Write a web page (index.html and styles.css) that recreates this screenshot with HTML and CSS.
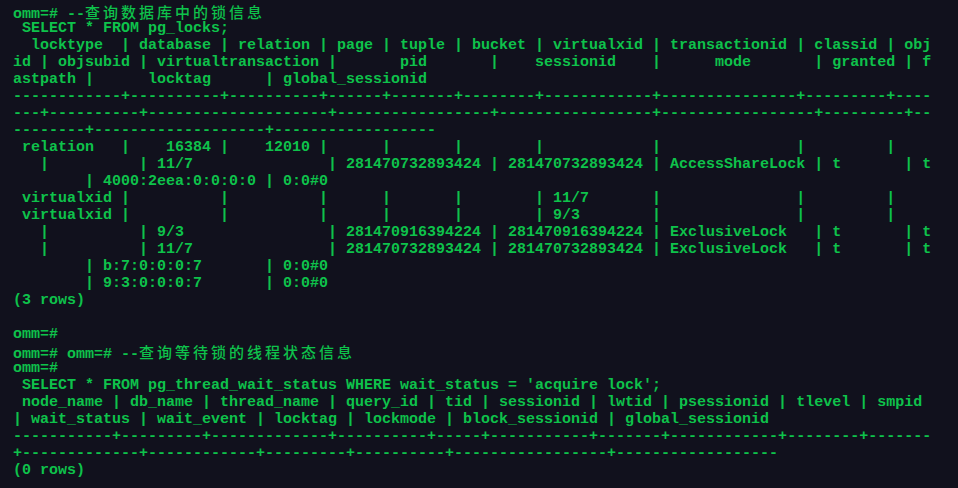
FILE: index.html
```html
<!DOCTYPE html>
<html lang="zh-CN">
<head>
<meta charset="utf-8">
<title>omm terminal</title>
<link rel="stylesheet" href="styles.css">
</head>
<body>
<div class="term">
<div class="ln">omm=# --<span class="cjk">查询数据库中的锁信息</span></div>
<div class="ln"> SELECT * FROM pg_locks;</div>
<div class="ln">  locktype  | database | relation | page | tuple | bucket | virtualxid | transactionid | classid | obj</div>
<div class="ln" id="l4"></div>
<div class="ln" id="l5"></div>
<div class="ln" id="l6"></div>
<div class="ln" id="l7"></div>
<div class="ln" id="l8"></div>
<div class="ln" id="l9"></div>
<div class="ln" id="l10"></div>
<div class="ln" id="l11"></div>
<div class="ln" id="l12"></div>
<div class="ln" id="l13"></div>
<div class="ln" id="l14"></div>
<div class="ln" id="l15"></div>
<div class="ln" id="l16"></div>
<div class="ln" id="l17"></div>
<div class="ln">(3 rows)</div>
<div class="ln"></div>
<div class="ln">omm=#</div>
<div class="ln">omm=# omm=# --<span class="cjk">查询等待锁的线程状态信息</span></div>
<div class="ln">omm=#</div>
<div class="ln"> SELECT * FROM pg_thread_wait_status WHERE wait_status = 'acquire lock';</div>
<div class="ln"> node_name | db_name | thread_name | query_id | tid | sessionid | lwtid | psessionid | tlevel | smpid</div>
<div class="ln">| wait_status | wait_event | locktag | lockmode | block_sessionid | global_sessionid</div>
<div class="ln" id="l26"></div>
<div class="ln" id="l27"></div>
<div class="ln">(0 rows)</div>
</div>
<script src="script.js"></script>
</body>
</html>
```
FILE: styles.css
```css
html, body {
  margin: 0;
  padding: 0;
  background: #11111d;
}
.term {
  padding: 3px 0 0 13px;
  font-family: "Liberation Mono", "DejaVu Sans Mono", monospace;
  font-size: 15px;
  font-weight: bold;
  color: #0ec24b;
}
.ln {
  height: 17px;
  line-height: 17px;
  white-space: pre;
}
.cjk {
  display: inline-block;
  height: 17px;
  line-height: 17px;
  vertical-align: baseline;
  font-family: "Noto Sans CJK SC", sans-serif;
  font-weight: 500;
  letter-spacing: 3px;
}
```
FILE: script.js
```js
(function () {
  function S(n) { return ' '.repeat(n); }
  function D(ws) { return ws.map(function (w) { return '-'.repeat(w); }).join('+'); }
  var lines = {
    l4: 'id | objsubid | virtualtransaction |' + S(7) + 'pid' + S(7) + '|' + S(4) + 'sessionid' + S(4) + '|' + S(6) + 'mode' + S(7) + '| granted | f',
    l5: 'astpath |' + S(6) + 'locktag' + S(6) + '| global_sessionid',
    l6: D([12, 10, 10, 6, 7, 8, 12, 15, 9, 4]),
    l7: D([3, 10, 20, 17, 17, 17, 9, 2]),
    l8: D([8, 19, 18]),
    l9: ' relation' + S(3) + '|' + S(4) + '16384 |' + S(4) + '12010 |' + S(6) + '|' + S(7) + '|' + S(8) + '|' + S(12) + '|' + S(15) + '|' + S(9) + '|',
    l10: S(3) + '|' + S(10) + '| 11/7' + S(15) + '| 281470732893424 | 281470732893424 | AccessShareLock | t' + S(7) + '| t',
    l11: S(8) + '| 4000:2eea:0:0:0:0 | 0:0#0',
    l12: ' virtualxid |' + S(10) + '|' + S(10) + '|' + S(6) + '|' + S(7) + '|' + S(8) + '| 11/7' + S(7) + '|' + S(15) + '|' + S(9) + '|',
    l13: ' virtualxid |' + S(10) + '|' + S(10) + '|' + S(6) + '|' + S(7) + '|' + S(8) + '| 9/3' + S(8) + '|' + S(15) + '|' + S(9) + '|',
    l14: S(3) + '|' + S(10) + '| 9/3' + S(16) + '| 281470916394224 | 281470916394224 | ExclusiveLock' + S(3) + '| t' + S(7) + '| t',
    l15: S(3) + '|' + S(10) + '| 11/7' + S(15) + '| 281470732893424 | 281470732893424 | ExclusiveLock' + S(3) + '| t' + S(7) + '| t',
    l16: S(8) + '| b:7:0:0:0:7' + S(7) + '| 0:0#0',
    l17: S(8) + '| 9:3:0:0:0:7' + S(7) + '| 0:0#0',
    l26: D([11, 9, 13, 10, 5, 11, 7, 12, 8, 7]),
    l27: '+' + D([13, 12, 9, 10, 17, 18])
  };
  Object.keys(lines).forEach(function (id) {
    var el = document.getElementById(id);
    if (el) { el.textContent = lines[id]; }
  });
})();
```
